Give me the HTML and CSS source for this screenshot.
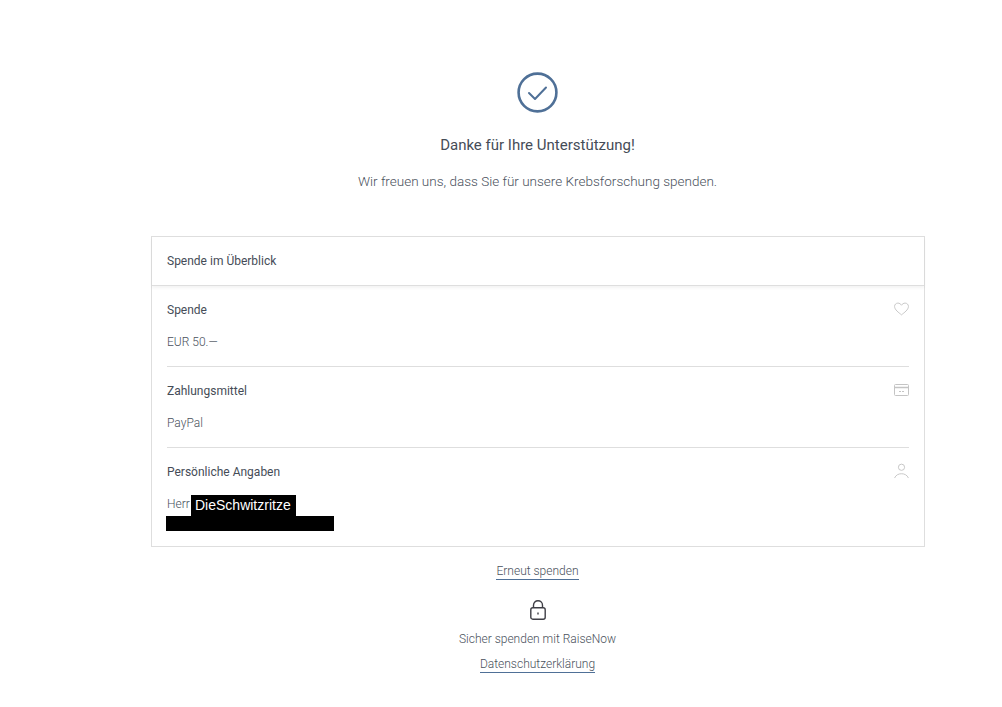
FILE: index.html
```html
<!DOCTYPE html>
<html lang="en">
<head>
    <meta charset="UTF-8">
    <meta name="viewport" content="width=device-width, initial-scale=1.0">
    <title>Danke</title>
    <link rel="stylesheet" href="styles.css">
</head>
<body>
    <div class="page">
        <div class="intro">
            <svg class="check" width="41" height="41" viewBox="0 0 41 41" fill="none">
                <circle cx="20.500" cy="20.500" r="18.900" stroke="#4f7097" stroke-width="2.600"/>
                <path d="M12 21l6 6 11-11.500" stroke="#4f7097" stroke-width="2" stroke-linecap="round" stroke-linejoin="round"/>
            </svg>
            <h1 class="title">Danke für Ihre Unterstützung!</h1>
            <p class="lead">Wir freuen uns, dass Sie für unsere Krebsforschung spenden.</p>
        </div>

        <div class="card">
            <div class="card-header">Spende im Überblick</div>
            <div class="card-body">
                <div class="row">
                    <div class="row-head">
                        <span class="row-title">Spende</span>
                        <svg class="row-icon" width="15" height="14" viewBox="0 0 16 14" fill="none">
                            <path d="M8 13.2C5 10.8.6 7.8.6 4.3.6 2.2 2.2.7 4.1.7 5.700.7 7.200 1.600 8 3c.8-1.400 2.300-2.300 3.900-2.300 1.900 0 3.500 1.500 3.500 3.600 0 3.500-4.400 6.500-7.400 8.900z" stroke="#c4c4c4"/>
                        </svg>
                    </div>
                    <div class="row-value">EUR 50.—</div>
                </div>
                <div class="row">
                    <div class="row-head">
                        <span class="row-title">Zahlungsmittel</span>
                        <svg class="row-icon icon-card" width="15" height="12" viewBox="0 0 15 12" fill="none">
                            <rect x=".5" y=".5" width="14" height="11" rx="1" stroke="#c4c4c4"/>
                            <path d="M.5 3.500h14" stroke="#c4c4c4" stroke-width="1.500"/>
                            <path d="M5 7.500h2M8 7.500h2" stroke="#c4c4c4"/>
                        </svg>
                    </div>
                    <div class="row-value">PayPal</div>
                </div>
                <div class="row row-last">
                    <div class="row-head">
                        <span class="row-title">Persönliche Angaben</span>
                        <svg class="row-icon icon-person" width="15" height="16" viewBox="0 0 16 16" fill="none">
                            <circle cx="8" cy="4" r="3.300" stroke="#c4c4c4"/>
                            <path d="M.6 15.500C2 12.300 4.800 10.900 8 10.900s6 1.400 7.400 4.600" stroke="#c4c4c4"/>
                        </svg>
                    </div>
                    <div class="row-value">Herr</div>
                    <div class="redact redact-name">DieSchwitzritze</div>
                    <div class="redact redact-line"></div>
                </div>
            </div>
        </div>

        <div class="footer">
            <a class="link" href="#">Erneut spenden</a>
            <svg class="lock" width="16" height="20" viewBox="0 0 16 20" fill="none">
                <rect x=".8" y="7.800" width="14.400" height="11.400" rx="2" stroke="#3f3f46" stroke-width="1.400"/>
                <path d="M3.500 7.800V5.200C3.500 2.700 5.500.8 8 .8s4.500 1.900 4.500 4.400v2.600" stroke="#3f3f46" stroke-width="1.400"/>
                <path d="M8 12.500v2" stroke="#3f3f46" stroke-width="1.400"/>
            </svg>
            <div class="secure">Sicher spenden mit RaiseNow</div>
            <a class="link" href="#">Datenschutzerklärung</a>
        </div>
    </div>
</body>
</html>
```

FILE: styles.css
```css
* {
    box-sizing: border-box;
}
body {
    margin: 0;
    background-color: #fff;
    font-family: Roboto, Arial, sans-serif;
    font-size: 12px;
    color: #454c57;
}
.page {
    width: 773px;
    margin-left: 151px;
    padding-top: 72px;
}
.intro {
    display: flex;
    flex-direction: column;
    align-items: center;
}
.check {
    display: block;
}
.title {
    margin: 22px 0 0;
    font-size: 15px;
    line-height: 20px;
    font-weight: 400;
    color: #454c57;
}
.lead {
    margin: 16px 0 0;
    font-size: 13.500px;
    line-height: 20px;
    font-weight: 300;
    color: #4a515c;
}
.card {
    margin-top: 45px;
    width: 774px;
    height: 311px;
    border: 1px solid #dedede;
}
.card-header {
    height: 49px;
    padding: 0 15px;
    line-height: 49px;
    border-bottom: 1px solid #dedede;
    box-shadow: 0 2px 3px rgba(0, 0, 0, 0.05);
}
.card-body {
    padding: 0 15px;
}
.row {
    position: relative;
    height: 81px;
    padding-top: 14px;
    border-bottom: 1px solid #dedede;
}
.row-last {
    border-bottom: none;
}
.row-head {
    display: flex;
    justify-content: space-between;
    align-items: flex-start;
    height: 20px;
    line-height: 20px;
}
.row-icon {
    display: block;
    margin-top: 2px;
}
.icon-card {
    margin-top: 3px;
}
.icon-person {
    margin-top: 1px;
}
.row-value {
    margin-top: 12px;
    line-height: 20px;
    font-weight: 300;
    color: #4a515c;
}
.redact {
    position: absolute;
    background-color: #000;
    color: #fff;
    font-family: "Liberation Sans", Arial, sans-serif;
}
.redact-name {
    left: 24px;
    top: 47px;
    width: 105px;
    height: 21px;
    padding-left: 4px;
    font-size: 14px;
    line-height: 20px;
}
.redact-line {
    left: -1px;
    top: 68px;
    width: 168px;
    height: 15px;
}
.footer {
    display: flex;
    flex-direction: column;
    align-items: center;
    padding-top: 16px;
}
.link {
    display: block;
    line-height: 16px;
    font-weight: 300;
    color: #4a515c;
    text-decoration: none;
    border-bottom: 1px solid #4f7097;
}
.lock {
    display: block;
    margin-top: 20px;
}
.secure {
    margin-top: 9px;
    line-height: 20px;
    font-weight: 300;
    color: #4a515c;
}
.footer .link:last-child {
    margin-top: 7px;
}
```
